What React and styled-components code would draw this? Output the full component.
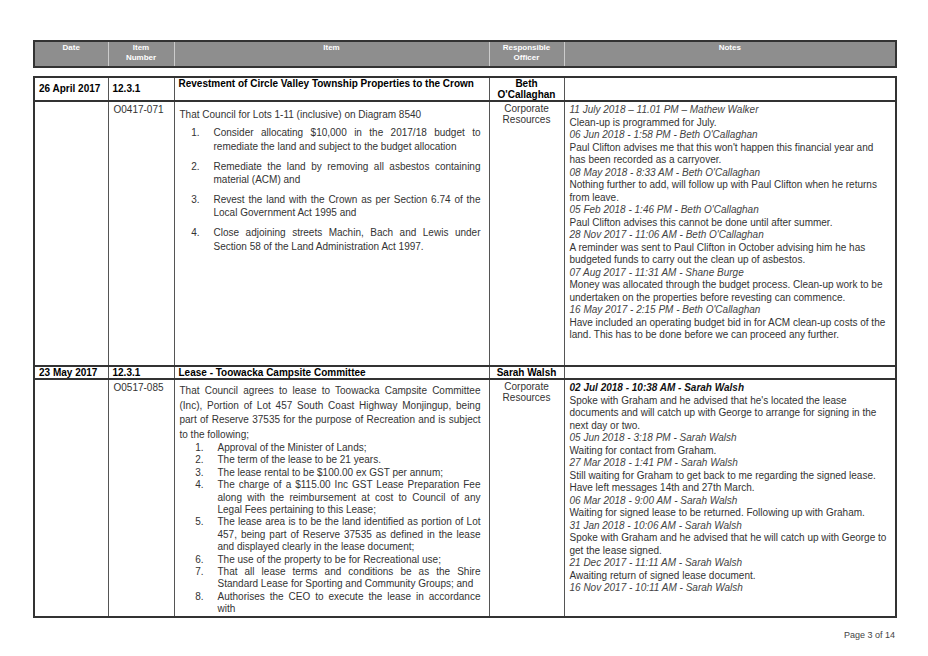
import React from "react";
import styled, { createGlobalStyle } from "styled-components";

const Global = createGlobalStyle`
  html,body{margin:0;padding:0;background:#fff;}
  body{font-family:"Liberation Sans",Arial,sans-serif;color:#222;}
`;
const Page = styled.div`width:928px;height:656px;padding:40px 33px 0 33px;box-sizing:border-box;display:flex;flex-direction:column;`;
const Table = styled.table`border-collapse:collapse;width:862px;table-layout:fixed;border:2px solid #333;`;
const Th = styled.th`background:#8e8e8e;color:#fff;font-size:8px;font-weight:bold;line-height:10px;height:22px;vertical-align:top;padding:1px 3px;border-left:1px solid #ccc;&:first-child{border-left:none;}`;
const Spacer = styled.div`height:8px;`;
const Td = styled.td`border:1px solid #555;vertical-align:top;padding:${p=>p.$pad||"2px 5px"};font-size:${p=>p.$fs||"10px"};line-height:${p=>p.$lh||"12.5px"};font-weight:${p=>p.$bold?"bold":"normal"};text-align:${p=>p.$center?"center":"left"};color:${p=>p.$bold?"#000":"#333"};height:${p=>p.$h||"auto"};box-sizing:border-box;`;
const HeadRow = styled.tr`border-top:2px solid #333;border-bottom:2px solid #333;&:first-child{border-top:none;}`;
const Para = styled.p`margin:${p=>p.$m||"0"};text-align:justify;`;
const List = styled.ol`margin:0;padding:0;list-style:none;`;
const Li = styled.li`display:flex;margin:${p=>p.$m||"0"};text-align:justify;`;
const Num = styled.span`flex:0 0 ${p=>p.$w||"34px"};text-align:right;padding-right:14px;box-sizing:border-box;`;
const When = styled.div`font-style:italic;font-weight:${p=>p.$bold?"bold":"normal"};color:${p=>p.$bold?"#111":"#444"};`;
const Body = styled.div``;
const Footer = styled.div`margin-top:12px;text-align:right;font-size:9px;color:#444;`;

const notes1 = [
  ["11 July 2018 – 11.01 PM – Mathew Walker","Clean-up is programmed for July."],
  ["06 Jun 2018 - 1:58 PM - Beth O'Callaghan","Paul Clifton advises me that this won't happen this financial year and has been recorded as a carryover."],
  ["08 May 2018 - 8:33 AM - Beth O'Callaghan","Nothing further to add, will follow up with Paul Clifton when he returns from leave."],
  ["05 Feb 2018 - 1:46 PM - Beth O'Callaghan","Paul Clifton advises this cannot be done until after summer."],
  ["28 Nov 2017 - 11:06 AM - Beth O'Callaghan","A reminder was sent to Paul Clifton in October advising him he has budgeted funds to carry out the clean up of asbestos."],
  ["07 Aug 2017 - 11:31 AM - Shane Burge","Money was allocated through the budget process. Clean-up work to be undertaken on the properties before revesting can commence."],
  ["16 May 2017 - 2:15 PM - Beth O'Callaghan","Have included an operating budget bid in for ACM clean-up costs of the land.  This has to be done before we can proceed any further."],
];
const notes2 = [
  ["02 Jul 2018 - 10:38 AM - Sarah  Walsh","Spoke with Graham and he advised that he's located the lease documents and will catch up with George to arrange for signing in the next day or two."],
  ["05 Jun 2018 - 3:18 PM - Sarah  Walsh","Waiting for contact from Graham."],
  ["27 Mar 2018 - 1:41 PM - Sarah  Walsh","Still waiting for Graham to get back to me regarding the signed lease. Have left messages 14th and 27th March."],
  ["06 Mar 2018 - 9:00 AM - Sarah  Walsh","Waiting for signed lease to be returned. Following up with Graham."],
  ["31 Jan 2018 - 10:06 AM - Sarah  Walsh","Spoke with Graham and he advised that he will catch up with George to get the lease signed."],
  ["21 Dec 2017 - 11:11 AM - Sarah  Walsh","Awaiting return of signed lease document."],
  ["16 Nov 2017 - 10:11 AM - Sarah  Walsh",null],
];
const list1 = [
  "Consider allocating $10,000 in the 2017/18 budget to remediate the land and subject to the budget allocation",
  "Remediate the land by removing all asbestos containing material (ACM) and",
  "Revest the land with the Crown as per Section 6.74 of the Local Government Act 1995 and",
  "Close adjoining streets Machin, Bach and Lewis under Section 58 of the Land Administration Act 1997.",
];
const list2 = [
  "Approval of the Minister of Lands;","The term of the lease to be 21 years.","The lease rental to be $100.00 ex GST per annum;",
  "The charge of a $115.00 Inc GST Lease Preparation Fee along with the reimbursement at cost to Council of any Legal Fees pertaining to this Lease;",
  "The lease area is to be the land identified as portion of Lot 457, being part of Reserve 37535 as defined in the lease and displayed clearly in the lease document;",
  "The use of the property to be for Recreational use;",
  "That all lease terms and conditions be as the Shire Standard Lease for Sporting and Community Groups; and",
  "Authorises the CEO to execute the lease in accordance with",
];
const Notes = ({items, boldFirst}) => items.map(([w,t],i)=>(
  <React.Fragment key={i}><When $bold={boldFirst&&i===0}>{w}</When>{t&&<Body>{t}</Body>}</React.Fragment>
));

const cols=[74,66,315,75,332];
const Cols = () => <colgroup>{cols.map((w,i)=><col key={i} style={{width:w}}/>)}</colgroup>;
export default function App(){
  return <Page><Global/>
    <Table><Cols/>
      <thead><tr><Th>Date</Th><Th>Item<br/>Number</Th><Th>Item</Th><Th>Responsible<br/>Officer</Th><Th>Notes</Th></tr></thead>
    </Table>
    <Spacer/>
    <Table><Cols/>
      <tbody>
        <HeadRow>
          <Td $bold $lh="11px" $pad="5px 4px 1px">26 April 2017</Td>
          <Td $bold $lh="11px" $pad="5px 4px 1px">12.3.1</Td>
          <Td $bold $lh="11px" $pad="0 4px">Revestment of Circle Valley Township Properties to the Crown</Td>
          <Td $bold $lh="11px" $center $pad="0 2px">Beth<br/>O'Callaghan</Td>
          <Td/>
        </HeadRow>
        <tr>
          <Td $h="265px"/>
          <Td $pad="2px 5px">O0417-071</Td>
          <Td $lh="13.4px" $pad="6px 8px 2px 5px">
            <Para $m="0 0 5px">That Council for Lots 1-11 (inclusive) on Diagram 8540</Para>
            <List>{list1.map((t,i)=><Li key={i} $m="0 0 6.5px 0"><Num $w="34px">{i+1}.</Num><span>{t}</span></Li>)}</List>
          </Td>
          <Td $center $lh="10.5px" $pad="2px 3px">Corporate<br/>Resources</Td>
          <Td $pad="2px 5px"><Notes items={notes1}/></Td>
        </tr>
        <HeadRow>
          <Td $bold $lh="11px" $pad="0 4px">23 May 2017</Td>
          <Td $bold $lh="11px" $pad="0 4px">12.3.1</Td>
          <Td $bold $lh="11px" $pad="0 4px">Lease - Toowacka Campsite Committee</Td>
          <Td $bold $lh="11px" $center $pad="0 2px">Sarah  Walsh</Td>
          <Td/>
        </HeadRow>
        <tr>
          <Td $h="234px"/>
          <Td>O0517-085</Td>
          <Td $lh="12.4px" $pad="4px 8px 0 5px">
            <Para style={{lineHeight:"14.5px"}}>That Council agrees to lease to Toowacka Campsite Committee (Inc), Portion of Lot 457 South Coast Highway Monjingup, being part of Reserve 37535 for the purpose of Recreation and is subject to the following;</Para>
            <List>{list2.map((t,i)=><Li key={i}><Num $w="38px">{i+1}.</Num><span>{t}</span></Li>)}</List>
          </Td>
          <Td $center $lh="10.5px" $pad="2px 3px">Corporate<br/>Resources</Td>
          <Td $pad="2px 5px"><Notes items={notes2} boldFirst/></Td>
        </tr>
      </tbody>
    </Table>
    <Footer>Page 3 of 14</Footer>
  </Page>;
}
